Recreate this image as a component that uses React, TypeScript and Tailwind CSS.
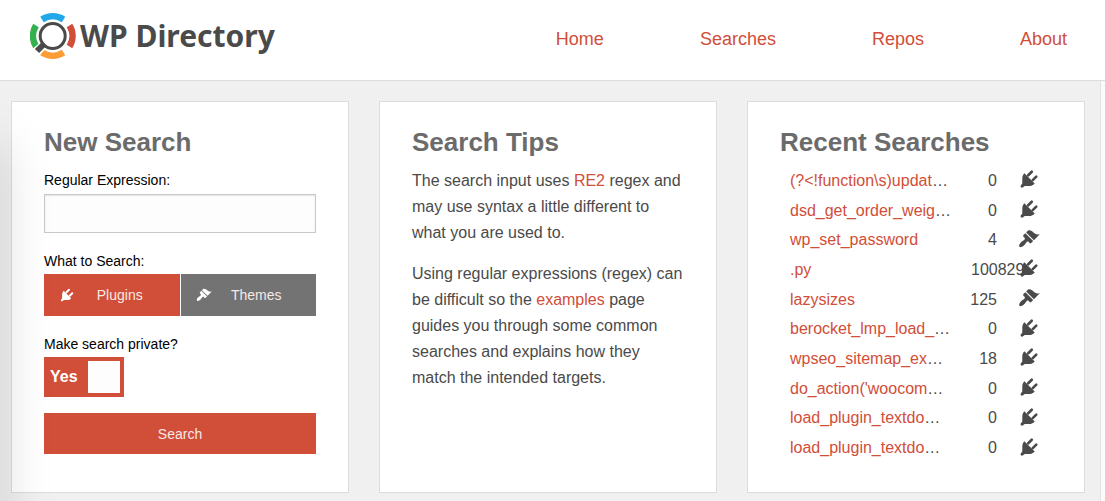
import React, { useState } from 'react';

type Kind = 'plugin' | 'theme';

interface IconProps {
  className?: string;
}

interface RecentSearch {
  id: number;
  pattern: string;
  truncated: boolean;
  matches: number;
  kind: Kind;
}

const navLinks = ['Home', 'Searches', 'Repos', 'About'];

const recentSearches: RecentSearch[] = [
  { id: 1, pattern: '(?<!function\\s)updat', truncated: true, matches: 0, kind: 'plugin' },
  { id: 2, pattern: 'dsd_get_order_weig', truncated: true, matches: 0, kind: 'plugin' },
  { id: 3, pattern: 'wp_set_password', truncated: false, matches: 4, kind: 'theme' },
  { id: 4, pattern: '.py', truncated: false, matches: 100829, kind: 'plugin' },
  { id: 5, pattern: 'lazysizes', truncated: false, matches: 125, kind: 'theme' },
  { id: 6, pattern: 'berocket_lmp_load_', truncated: true, matches: 0, kind: 'plugin' },
  { id: 7, pattern: 'wpseo_sitemap_ex', truncated: true, matches: 18, kind: 'plugin' },
  { id: 8, pattern: "do_action('woocom", truncated: true, matches: 0, kind: 'plugin' },
  { id: 9, pattern: 'load_plugin_textdo', truncated: true, matches: 0, kind: 'plugin' },
  { id: 10, pattern: 'load_plugin_textdo', truncated: true, matches: 0, kind: 'plugin' },
];

const PlugIcon: React.FC<IconProps> = ({ className = '' }) => (
  <svg viewBox="0 0 20 20" fill="currentColor" aria-hidden="true" className={className}>
    <path d="M4.900 5.900l.9-1.100 9.400 9.400-1.300 1c-.8.700-2.600 1.100-3.800 1.100H6.100l-1.500 1.200c-.6.600-1.500.5-1.900.1-.5-.5-.5-1.300 0-1.900L3.900 14V9.700c0-1.200.3-2.900 1-3.800z" />
    <path
      d="M9.300 6.600L12.500 3.400M13.400 11L16.600 7.800"
      fill="none"
      stroke="currentColor"
      strokeWidth="2.400"
      strokeLinecap="round"
    />
  </svg>
);

const BrushIcon: React.FC<IconProps> = ({ className = '' }) => (
  <svg viewBox="0 0 20 20" fill="currentColor" aria-hidden="true" className={className}>
    <path d="M14.48 11.06L7.41 3.99l1.5-1.5c.5-.56 2.3-.47 3.51.32 1.21.8 1.43 1.28 2.91 2.1 1.18.64 2.45 1.26 4.45.85zm-.71.71L6.7 4.7 4.93 6.47c-.39.39-.39 1.02 0 1.41l1.06 1.06c.39.39.39 1.03 0 1.42-.6.6-1.43 1.11-2.21 1.69-.35.26-.7.53-1.01.84C1.43 14.23.4 16.08 1.4 17.07c.99 1 2.84-.03 4.18-1.36.31-.31.58-.66.85-1.02.57-.78 1.08-1.61 1.69-2.21.39-.39 1.02-.39 1.41 0l1.06 1.06c.39.39 1.02.39 1.41 0z" />
  </svg>
);

const Logo: React.FC = () => (
  <a href="#home" className="flex items-center gap-1 text-[#4a4a4a]">
    <svg viewBox="0 0 46 46" fill="none" aria-hidden="true" className="h-[46px] w-[46px]">
      <path d="M12 6.500A20 20 0 0 1 33.500 6.500" stroke="#22a7e8" strokeWidth="6.500" />
      <path d="M39.500 12.500A20 20 0 0 1 39.500 33.500" stroke="#d14e38" strokeWidth="6.500" />
      <path d="M33.500 39.500A20 20 0 0 1 12 39.500" stroke="#fb9c35" strokeWidth="6.500" />
      <path d="M6 33.500A20 20 0 0 1 6 12.500" stroke="#33b14f" strokeWidth="6.500" />
      <path d="M16 30L6 39" stroke="#fff" strokeWidth="9" />
      <circle cx="22.700" cy="23" r="15.500" fill="#fff" />
      <path d="M14.500 30.500L7 38" stroke="#4a4a4a" strokeWidth="6" />
      <circle cx="22.700" cy="23" r="12.500" stroke="#4a4a4a" strokeWidth="3" />
    </svg>
    <span className="font-['Noto_Sans',sans-serif] text-[30px] leading-[46px] font-bold">WP Directory</span>
  </a>
);

const Card: React.FC<{ title: string; children: React.ReactNode }> = ({ title, children }) => (
  <section className="min-h-[392px] border border-[#dcdcdc] bg-white px-8 pt-6">
    <h2 className="text-[26px] leading-8 font-bold text-[#6b6b6b]">{title}</h2>
    {children}
  </section>
);

const SearchForm: React.FC = () => {
  const [kind, setKind] = useState<Kind>('plugin');
  const [isPrivate, setIsPrivate] = useState(true);

  const options = [
    { id: 'plugin' as Kind, label: 'Plugins', icon: PlugIcon },
    { id: 'theme' as Kind, label: 'Themes', icon: BrushIcon },
  ];

  return (
    <form className="pt-[10px] text-sm text-black" onSubmit={(e) => e.preventDefault()}>
      <label htmlFor="regex" className="block pb-[2px] leading-6">Regular Expression:</label>
      <input
        id="regex"
        type="text"
        className="block h-[39px] w-full border border-[#c8c8c8] bg-[#fdfdfd] px-2 shadow-[inset_0_1px_2px_rgba(0,0,0,0.1)]"
      />

      <fieldset className="mt-4">
        <legend className="pb-px leading-6">What to Search:</legend>
        <div className="grid grid-cols-2 gap-px">
          {options.map((option) => {
            const IconComponent = option.icon;
            return (
              <label
                key={option.id}
                className={`flex h-[42px] cursor-pointer items-center px-[15px] text-[#f6e9e7] ${
                  kind === option.id ? 'bg-[#d14e38]' : 'bg-[#737373]'
                }`}
              >
                <input
                  type="radio"
                  name="kind"
                  value={option.id}
                  checked={kind === option.id}
                  onChange={() => setKind(option.id)}
                  className="sr-only"
                />
                <IconComponent className="h-4 w-4 text-white" />
                <span className="flex-1 text-center">{option.label}</span>
              </label>
            );
          })}
        </div>
      </fieldset>

      <div className="mt-4">
        <label htmlFor="private" className="block pb-px leading-6">Make search private?</label>
        <label className="flex h-10 w-20 cursor-pointer items-center justify-between bg-[#d14e38] pr-1 pl-[6px] text-base font-bold text-white">
          <input
            id="private"
            type="checkbox"
            checked={isPrivate}
            onChange={() => setIsPrivate(!isPrivate)}
            className="sr-only"
          />
          {isPrivate ? 'Yes' : 'No'}
          <span className="h-8 w-8 bg-[#fdfdfd]" />
        </label>
      </div>

      <button type="submit" className="mt-4 h-[41px] w-full cursor-pointer bg-[#d14e38] text-[#f6e9e7]">
        Search
      </button>
    </form>
  );
};

const RecentTable: React.FC = () => (
  <table className="mt-2 h-[297px] w-full table-fixed border-collapse">
    <tbody>
      {recentSearches.map((search) => {
        const IconComponent = search.kind === 'plugin' ? PlugIcon : BrushIcon;
        return (
          <tr key={search.id}>
            <td className="p-0 pl-[10px] whitespace-nowrap">
              <a href={`#search-${search.id}`} className="text-[#d14e38]">{search.pattern}</a>
              {search.truncated && '…'}
            </td>
            <td className="w-[26px] p-0">
              <div className={search.matches > 999 ? '' : 'flex justify-end'}>{search.matches}</div>
            </td>
            <td className="w-[55px] p-0 pb-[3px] pl-[21px]">
              <IconComponent className="h-[22px] w-[22px]" />
            </td>
          </tr>
        );
      })}
    </tbody>
  </table>
);

const App: React.FC = () => {
  return (
    <div className="flex min-h-screen flex-col bg-white font-['Liberation_Sans',Arial,sans-serif] text-[#4a4a4a]">
      <header className="flex h-[81px] items-start justify-between border-b border-[#dcdcdc] pt-[13px] pr-[38px] pl-[30px]">
        <Logo />
        <nav className="flex gap-24 pt-3 text-lg leading-7 text-[#d14e38]">
          {navLinks.map((link) => (
            <a key={link} href={`#${link.toLowerCase()}`}>{link}</a>
          ))}
        </nav>
      </header>

      <div className="flex flex-1 bg-[#fafafa] pr-1">
        <main className="relative flex-1 overflow-hidden border-r border-[#e2e2e2] bg-[#f0f0f0] pt-5 pr-[15px] pb-2 pl-[11px]">
          <div className="grid grid-cols-3 gap-[30px]">
            <Card title="New Search">
              <SearchForm />
            </Card>

            <Card title="Search Tips">
              <div className="space-y-[15px] pt-[10px] text-base leading-[26px]">
                <p>
                  The search input uses <a href="#re2" className="text-[#d14e38]">RE2</a> regex and may use syntax a
                  little different to what you are used to.
                </p>
                <p>
                  Using regular expressions (regex) can be difficult so the{' '}
                  <a href="#examples" className="text-[#d14e38]">examples</a> page guides you through some common
                  searches and explains how they match the intended targets.
                </p>
              </div>
            </Card>

            <Card title="Recent Searches">
              <RecentTable />
            </Card>
          </div>
          {/* soft shade along the left edge */}
          <div className="pointer-events-none absolute top-16 -bottom-16 -left-4 w-4 shadow-[0_0_48px_0_rgba(0,0,0,0.25)]" />
        </main>
      </div>
    </div>
  );
};

export default App;
